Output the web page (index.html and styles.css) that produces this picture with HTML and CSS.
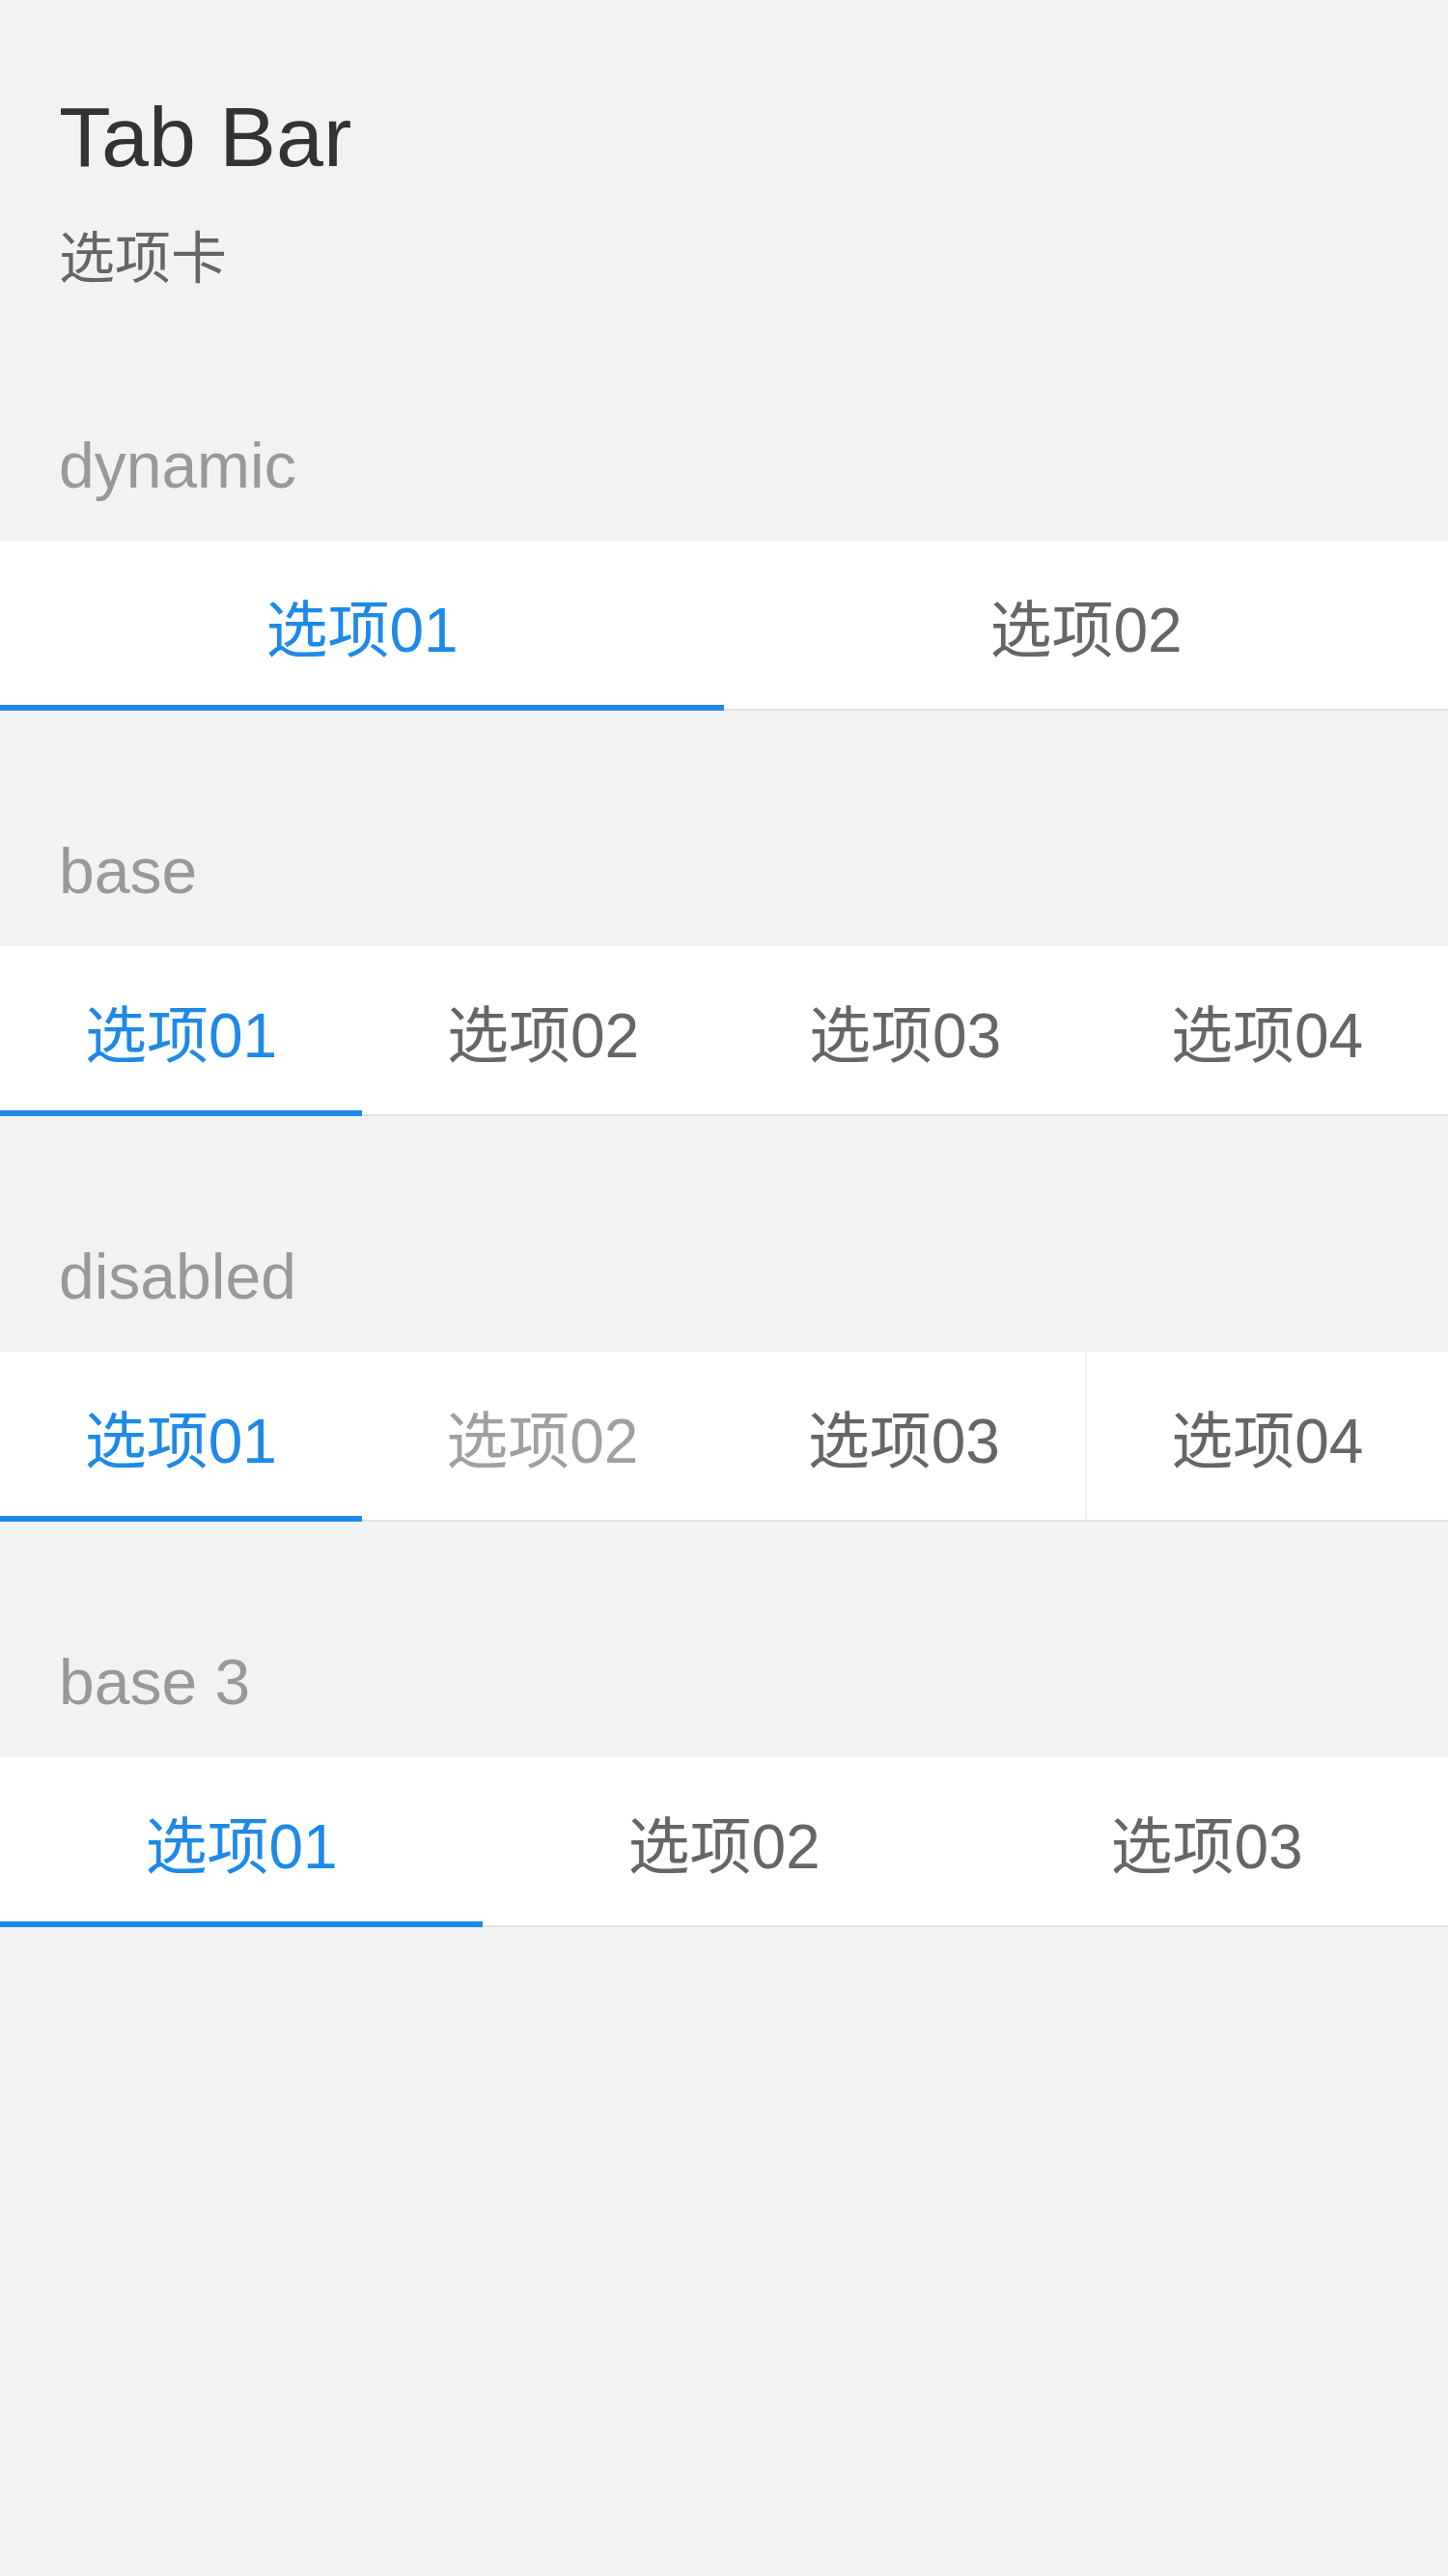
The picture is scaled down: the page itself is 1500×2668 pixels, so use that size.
FILE: index.html
```html
<!DOCTYPE html>
<html lang="zh-CN">
<head>
<meta charset="utf-8">
<title>Tab Bar</title>
<link rel="stylesheet" href="styles.css">
</head>
<body>
<div class="page">
  <header class="header">
    <h1 class="title">Tab Bar</h1>
    <p class="desc">选项卡</p>
  </header>

  <section class="section">
    <div class="label">dynamic</div>
    <div class="tabbar">
      <div class="tab active">选项01</div>
      <div class="tab">选项02</div>
    </div>
  </section>

  <section class="section">
    <div class="label">base</div>
    <div class="tabbar">
      <div class="tab active">选项01</div>
      <div class="tab">选项02</div>
      <div class="tab">选项03</div>
      <div class="tab">选项04</div>
    </div>
  </section>

  <section class="section">
    <div class="label">disabled</div>
    <div class="tabbar">
      <div class="tab active">选项01</div>
      <div class="tab disabled">选项02</div>
      <div class="tab">选项03</div>
      <div class="tab divided">选项04</div>
    </div>
  </section>

  <section class="section">
    <div class="label">base 3</div>
    <div class="tabbar">
      <div class="tab active">选项01</div>
      <div class="tab">选项02</div>
      <div class="tab">选项03</div>
    </div>
  </section>
</div>
</body>
</html>
```

FILE: styles.css
```css
* {
  box-sizing: border-box;
}

html, body {
  margin: 0;
  padding: 0;
  background: #f2f2f2;
}

body {
  font-family: "Liberation Sans", "Noto Sans CJK SC", sans-serif;
  min-height: 2668px;
}

.header {
  padding: 100px 61px 19px;
}

.title {
  margin: 0;
  font-size: 88px;
  line-height: 84px;
  font-weight: normal;
  color: #333333;
}

.desc {
  margin: 55px 0 0;
  font-size: 58px;
  line-height: 58px;
  color: #666666;
}

.section {
  padding-top: 134px;
}

.label {
  padding-left: 61px;
  font-size: 66px;
  line-height: 64px;
  color: #999999;
  margin-bottom: 46px;
}

.tabbar {
  display: flex;
  height: 176px;
  background: #ffffff;
  border-bottom: 2px solid #e3e3e3;
}

.tab {
  position: relative;
  flex: 1 1 0;
  display: flex;
  align-items: center;
  justify-content: center;
  padding-top: 0;
  font-size: 64px;
  color: #666666;
}

.tab.active {
  color: #1e89e8;
}

.tab.active::after {
  content: "";
  position: absolute;
  left: 0;
  right: 0;
  bottom: -2px;
  height: 6px;
  background: #1e89e8;
}

.tab.disabled {
  color: #a0a0a0;
}

.tab.divided {
  border-left: 2px solid #efefef;
}
```
